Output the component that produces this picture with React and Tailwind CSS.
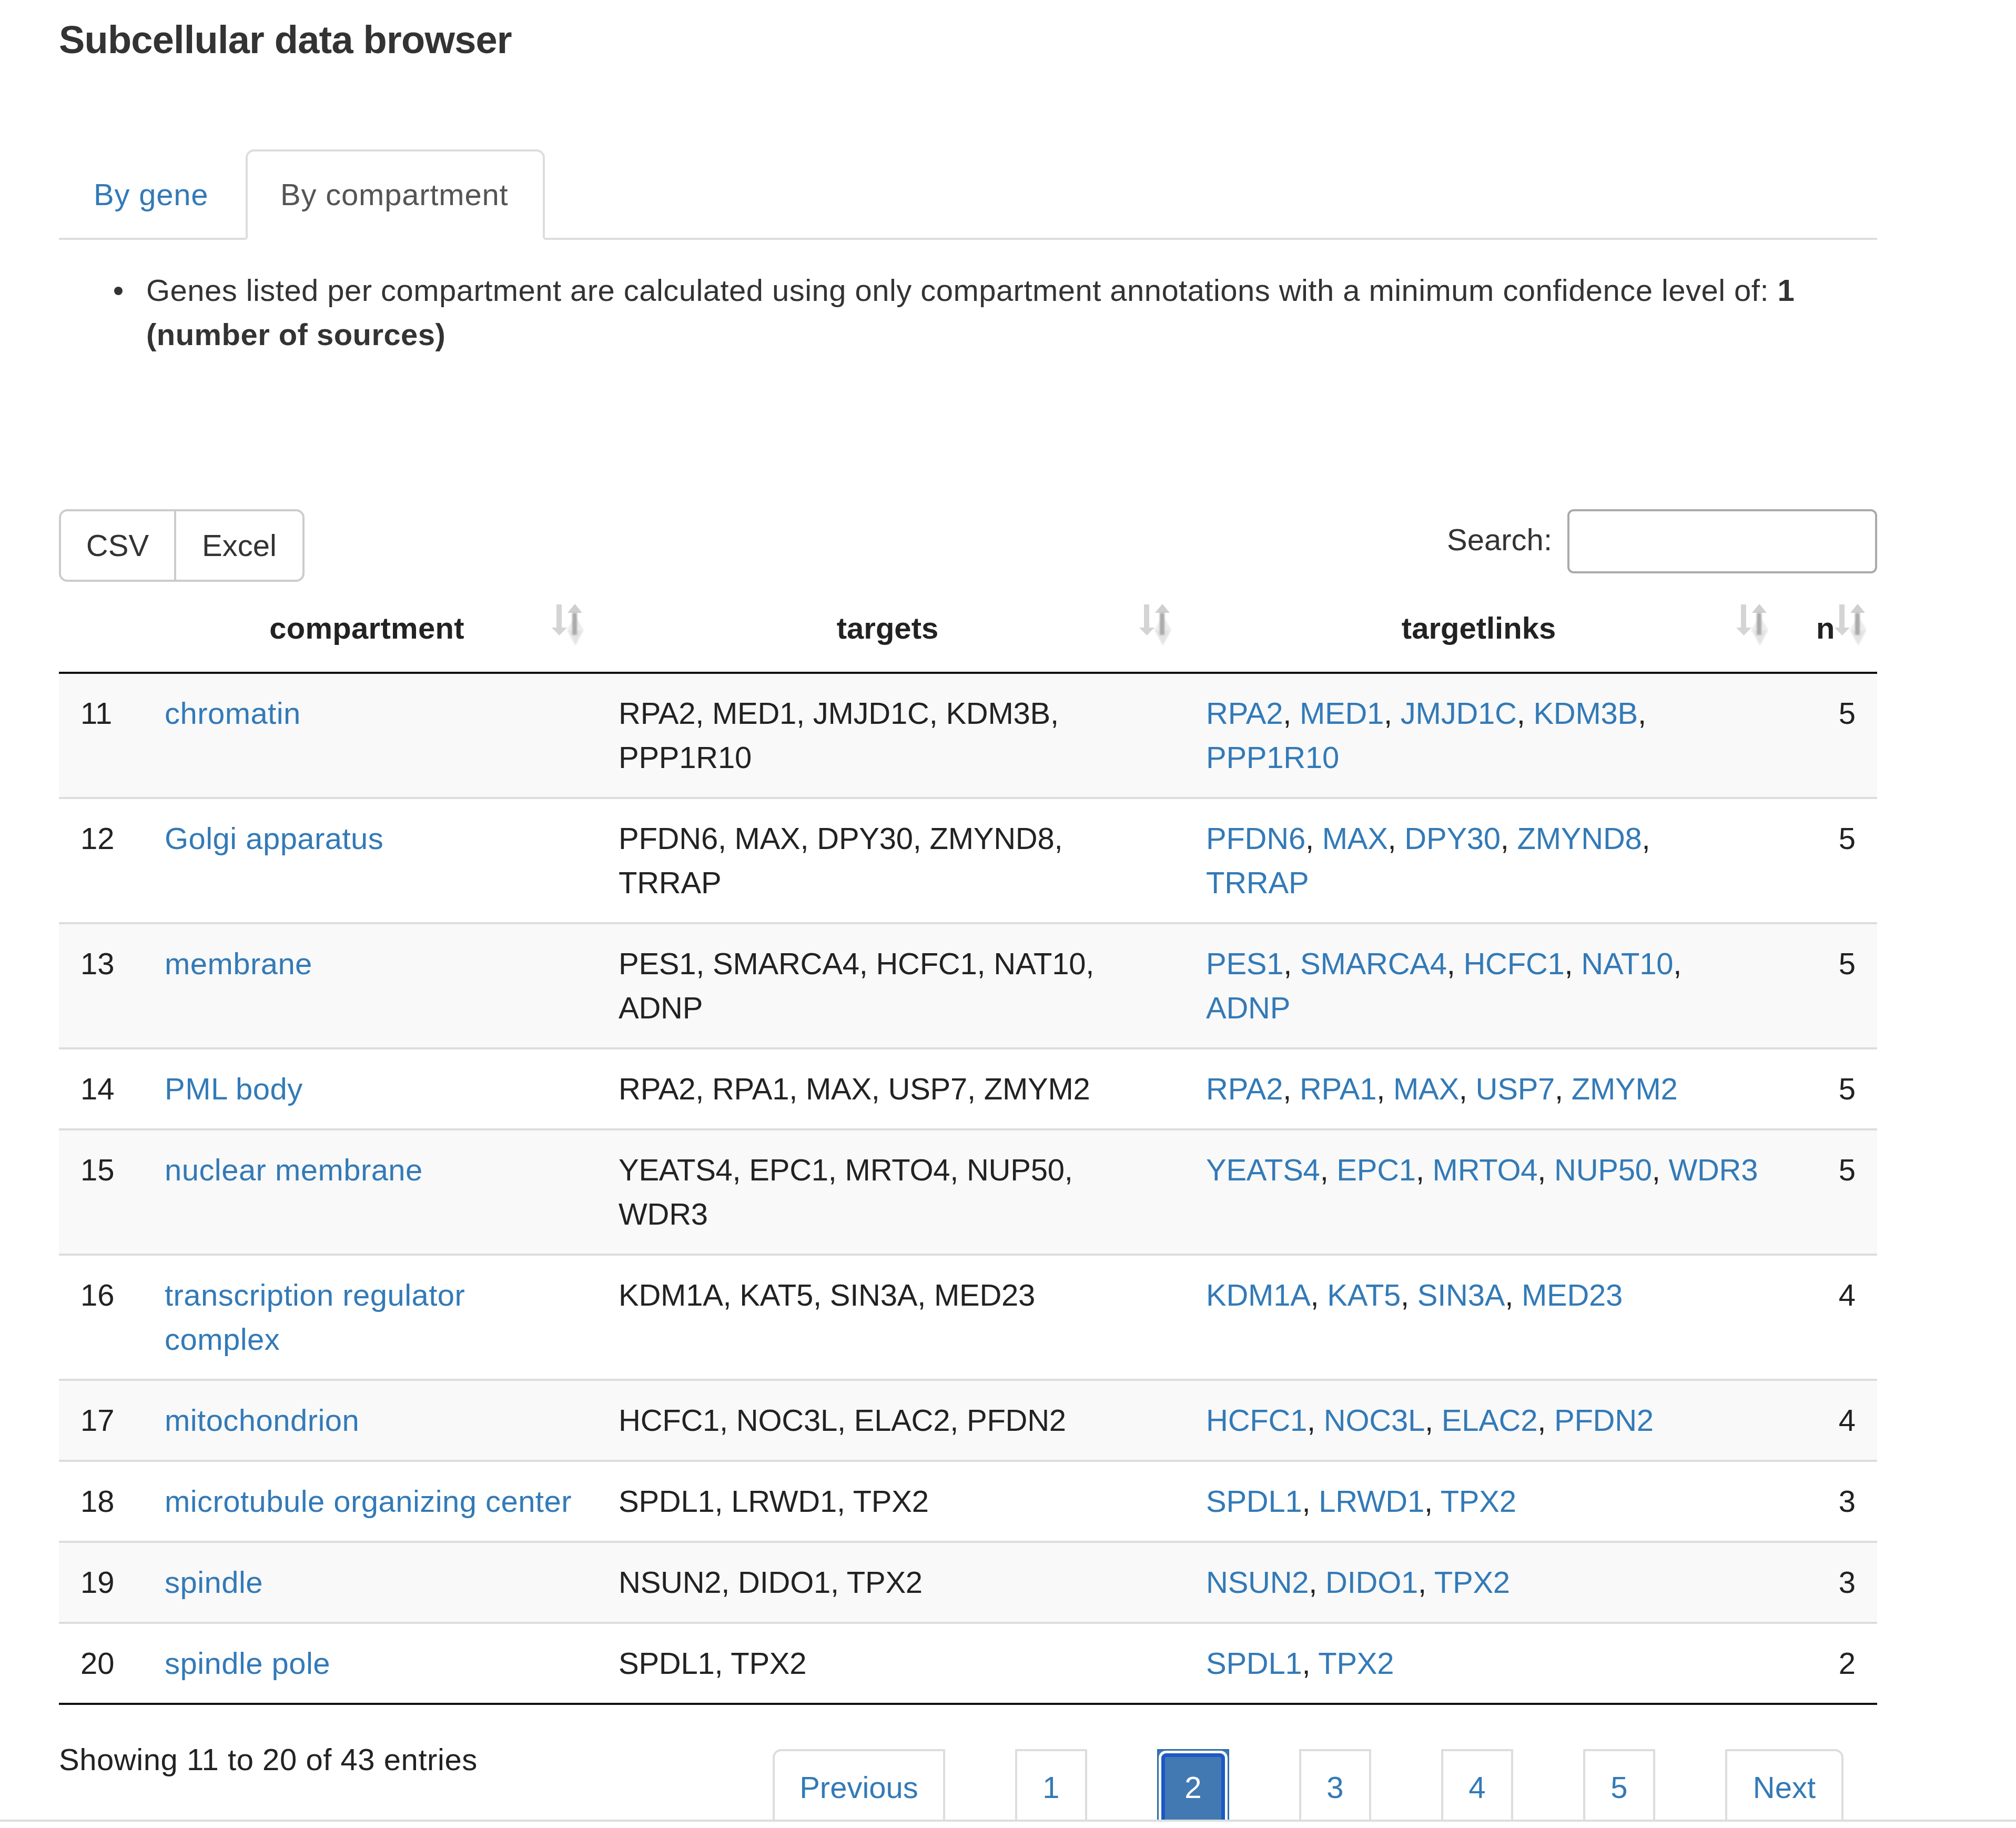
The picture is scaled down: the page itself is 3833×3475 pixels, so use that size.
import React from "react";

const rows = [
  { i: 11, c: ["chromatin"], g: ["RPA2", "MED1", "JMJD1C", "KDM3B", "PPP1R10"], tb: 4, lb: 4, n: 5 },
  { i: 12, c: ["Golgi apparatus"], g: ["PFDN6", "MAX", "DPY30", "ZMYND8", "TRRAP"], tb: 4, lb: 4, n: 5 },
  { i: 13, c: ["membrane"], g: ["PES1", "SMARCA4", "HCFC1", "NAT10", "ADNP"], tb: 4, lb: 4, n: 5 },
  { i: 14, c: ["PML body"], g: ["RPA2", "RPA1", "MAX", "USP7", "ZMYM2"], tb: 0, lb: 0, n: 5 },
  { i: 15, c: ["nuclear membrane"], g: ["YEATS4", "EPC1", "MRTO4", "NUP50", "WDR3"], tb: 4, lb: 0, n: 5 },
  { i: 16, c: ["transcription regulator", "complex"], g: ["KDM1A", "KAT5", "SIN3A", "MED23"], tb: 0, lb: 0, n: 4 },
  { i: 17, c: ["mitochondrion"], g: ["HCFC1", "NOC3L", "ELAC2", "PFDN2"], tb: 0, lb: 0, n: 4 },
  { i: 18, c: ["microtubule organizing center"], g: ["SPDL1", "LRWD1", "TPX2"], tb: 0, lb: 0, n: 3 },
  { i: 19, c: ["spindle"], g: ["NSUN2", "DIDO1", "TPX2"], tb: 0, lb: 0, n: 3 },
  { i: 20, c: ["spindle pole"], g: ["SPDL1", "TPX2"], tb: 0, lb: 0, n: 2 },
];

function splitLines(g, b) {
  if (!b) return [g];
  return [g.slice(0, b), g.slice(b)];
}

function SortIcon({ id, className }) {
  return (
    <svg className={className} width="70" height="100" viewBox="0 0 70 100">
      <defs>
        <filter id={id} x="-50%" y="-50%" width="200%" height="200%">
          <feGaussianBlur stdDeviation="1.6" />
        </filter>
      </defs>
      <polygon points="54,42 38,67 70,67" fill="#ececec" filter={`url(#${id})`} />
      <polygon points="38,67 70,67 54,97" fill="#e4e4e4" filter={`url(#${id})`} />
      <rect x="18" y="19" width="10" height="46" fill="#d4d4d4" />
      <polygon points="9,63 38,63 23.5,78" fill="#d4d4d4" />
      <polygon points="53,18 39,35 67,35" fill="#cfcfcf" />
      <rect x="48" y="35" width="9" height="42" fill="#ababab" filter={`url(#${id})`} />
    </svg>
  );
}

const gridCols = "grid grid-cols-[160px_863px_1117px_1135px_182px]";

export default function App() {
  return (
    <div className="bg-white text-[#333] font-['Liberation_Sans',Arial,sans-serif] text-[58px] leading-[84px]">
      <div className="pl-[112px] pr-[264px] pt-[35px]">
        <h3 className="text-[74px] leading-[82px] font-bold tracking-[-0.8px] text-[#333]">
          Subcellular data browser
        </h3>

        {/* Tabs */}
        <div className="mt-[167px] flex border-b-4 border-[#ddd] tracking-[0.8px]">
          <div className="w-[347px] mr-[8px] mb-[-4px] pt-[44px] pb-[44px] pl-[66px] text-[#337ab7]">
            By gene
          </div>
          <div className="w-[569px] mb-[-4px] border-4 border-[#ddd] border-b-white rounded-t-[16px] bg-white pt-[40px] pb-[40px] pl-[62px] text-[#555]">
            By compartment
          </div>
        </div>

        {/* Note */}
        <div className="mt-[54px] flex tracking-[0.45px]">
          <div className="w-[166px] shrink-0 relative">
            <span className="absolute left-[105px] top-[35px] w-[16px] h-[16px] rounded-full bg-[#333]"></span>
          </div>
          <div>
            Genes listed per compartment are calculated using only compartment annotations with a minimum confidence
            level of: <b>1</b>
            <br />
            <b>(number of sources)</b>
          </div>
        </div>

        {/* Buttons + search */}
        <div className="mt-[290px] flex items-start justify-between">
          <div className="flex">
            <div className="w-[223px] h-[138px] border-4 border-[#ccc] rounded-l-[16px] flex items-center justify-center text-[#333]">
              CSV
            </div>
            <div className="w-[244px] h-[138px] border-4 border-l-0 border-[#ccc] rounded-r-[16px] flex items-center justify-center text-[#333]">
              Excel
            </div>
          </div>
          <div className="flex items-start">
            <span className="mt-[16px] mr-[29px]">Search:</span>
            <div className="w-[589px] h-[122px] border-4 border-[#aaa] rounded-[12px] bg-white"></div>
          </div>
        </div>

        {/* Table */}
        <div className="mt-[5px]">
          <div className={`${gridCols} border-b-4 border-[#111] font-bold text-[#222]`}>
            <div className="py-[41px] px-[41px]"></div>
            <div className="relative py-[41px] px-[41px] text-center tracking-[0.3px]">
              <span className="relative left-[-6px]">compartment</span>
              <SortIcon id="s1" className="absolute right-[25px] top-[19px]" />
            </div>
            <div className="relative py-[41px] px-[41px] text-center">
              <span className="relative left-[-6px]">targets</span>
              <SortIcon id="s2" className="absolute right-[25px] top-[19px]" />
            </div>
            <div className="relative py-[41px] px-[41px] text-center">
              <span className="relative left-[-8px]">targetlinks</span>
              <SortIcon id="s3" className="absolute right-[25px] top-[19px]" />
            </div>
            <div className="relative py-[41px] pl-[66px] text-left">
              n
              <SortIcon id="s4" className="absolute right-[20px] top-[19px]" />
            </div>
          </div>

          {rows.map((r, idx) => {
            const last = idx === rows.length - 1;
            const tLines = splitLines(r.g, r.tb);
            const lLines = splitLines(r.g, r.lb);
            return (
              <div
                key={r.i}
                className={`${gridCols} ${idx % 2 === 0 ? "bg-[#f9f9f9]" : "bg-white"} border-b-4 ${
                  last ? "border-[#111]" : "border-[#ddd]"
                } text-[#222]`}
              >
                <div className="px-[41px] py-[33px]">{r.i}</div>
                <div className="px-[41px] py-[33px] text-[#337ab7] tracking-[0.45px]">
                  {r.c.map((c, k) => (
                    <div key={k} className="whitespace-nowrap">
                      {c}
                    </div>
                  ))}
                </div>
                <div className="px-[41px] py-[33px] tracking-[-0.25px]">
                  {tLines.map((line, k) => (
                    <div key={k} className="whitespace-nowrap">
                      {line.join(", ")}
                      {k < tLines.length - 1 ? "," : ""}
                    </div>
                  ))}
                </div>
                <div className="px-[41px] py-[33px] tracking-[-0.25px]">
                  {lLines.map((line, k) => (
                    <div key={k} className="whitespace-nowrap">
                      {line.map((gname, j) => (
                        <React.Fragment key={j}>
                          <span className="text-[#337ab7]">{gname}</span>
                          {j < line.length - 1 ? ", " : k < lLines.length - 1 ? "," : ""}
                        </React.Fragment>
                      ))}
                    </div>
                  ))}
                </div>
                <div className="px-[41px] py-[33px] text-right">{r.n}</div>
              </div>
            );
          })}
        </div>

        {/* Info + pagination */}
        <div className="mt-[62px] h-[156px] overflow-hidden flex items-start">
          <div className="text-[#222] tracking-[0.55px]">Showing 11 to 20 of 43 entries</div>
          <div className="ml-auto mr-[64px] mt-[22px] flex gap-[133px] text-[#337ab7]">
            <div className="w-[328px] h-[170px] border-4 border-[#ddd] rounded-tl-[16px] pt-[27px] text-center bg-white">
              Previous
            </div>
            <div className="w-[137px] h-[170px] border-4 border-[#ddd] pt-[27px] text-center bg-white">1</div>
            <div className="relative w-[137px] h-[170px] border-[3px] border-[#2e6da4] bg-[#4279b3] pt-[28px] text-center text-white">
              <span className="absolute inset-0 rounded-[14px] border-[5px] border-white"></span>
              <span className="absolute inset-[5px] rounded-[10px] border-[7px] border-[#1c58c6]"></span>
              <span className="relative">2</span>
            </div>
            <div className="w-[137px] h-[170px] border-4 border-[#ddd] pt-[27px] text-center bg-white">3</div>
            <div className="w-[137px] h-[170px] border-4 border-[#ddd] pt-[27px] text-center bg-white">4</div>
            <div className="w-[137px] h-[170px] border-4 border-[#ddd] pt-[27px] text-center bg-white">5</div>
            <div className="w-[225px] h-[170px] border-4 border-[#ddd] rounded-tr-[16px] pt-[27px] text-center bg-white">
              Next
            </div>
          </div>
        </div>
      </div>
      <div className="h-[4px] bg-[#ddd]"></div>
      <div className="h-[12px] bg-white"></div>
    </div>
  );
}
